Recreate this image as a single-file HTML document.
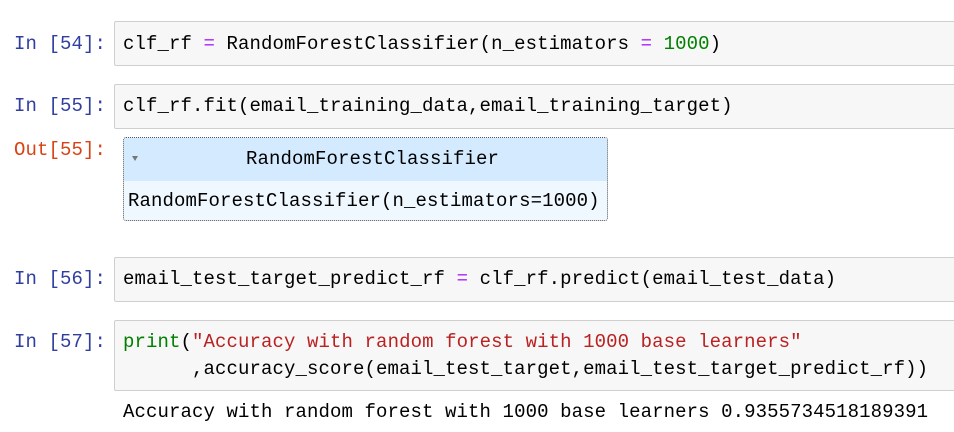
<!DOCTYPE html>
<html><head><style>
body{margin:0;width:954px;height:432px;background:#fff;position:relative;overflow:hidden;font-family:"Liberation Mono",monospace;font-size:19px;letter-spacing:0.1px;}
.a{position:absolute;white-space:pre;line-height:27px;}
.p{color:#303F9F;}
.o{color:#D84315;}
.box{position:absolute;left:114px;right:-2px;background:#f7f7f7;border:1px solid #cfcfcf;border-radius:2px;}
.g{color:#008000}.m{color:#AA22FF}.r{color:#BA2121}
</style></head><body>
<div class="box" style="top:21px;height:43px"></div>
<div class="a p" style="left:14px;top:31px">In [54]:</div>
<div class="a" style="left:123px;top:31px">clf_rf <span class="m">=</span> RandomForestClassifier(n_estimators <span class="m">=</span> <span class="g">1000</span>)</div>

<div class="box" style="top:84px;height:43px"></div>
<div class="a p" style="left:14px;top:93px">In [55]:</div>
<div class="a" style="left:123px;top:93px">clf_rf.fit(email_training_data,email_training_target)</div>

<div class="a o" style="left:14px;top:137px">Out[55]:</div>
<div style="position:absolute;left:123px;top:137px;width:483px;height:82px;border:1px dotted #555;border-radius:3px;background:#f0f8ff;overflow:hidden">
<div style="height:43px;background:#d4ebff"></div>
</div>
<div style="position:absolute;left:132px;top:156px;width:0;height:0;border-left:3px solid transparent;border-right:3px solid transparent;border-top:5px solid #777"></div>
<div class="a" style="left:246px;top:146px">RandomForestClassifier</div>
<div class="a" style="left:128px;top:188px">RandomForestClassifier(n_estimators=1000)</div>

<div class="box" style="top:257px;height:43px"></div>
<div class="a p" style="left:14px;top:266px">In [56]:</div>
<div class="a" style="left:123px;top:266px">email_test_target_predict_rf <span class="m">=</span> clf_rf.predict(email_test_data)</div>

<div class="box" style="top:320px;height:69px"></div>
<div class="a p" style="left:14px;top:329px">In [57]:</div>
<div class="a" style="left:123px;top:329px"><span class="g">print</span>(<span class="r">"Accuracy with random forest with 1000 base learners"</span>
      ,accuracy_score(email_test_target,email_test_target_predict_rf))</div>

<div class="a" style="left:123px;top:399px">Accuracy with random forest with 1000 base learners 0.9355734518189391</div>
</body></html>
